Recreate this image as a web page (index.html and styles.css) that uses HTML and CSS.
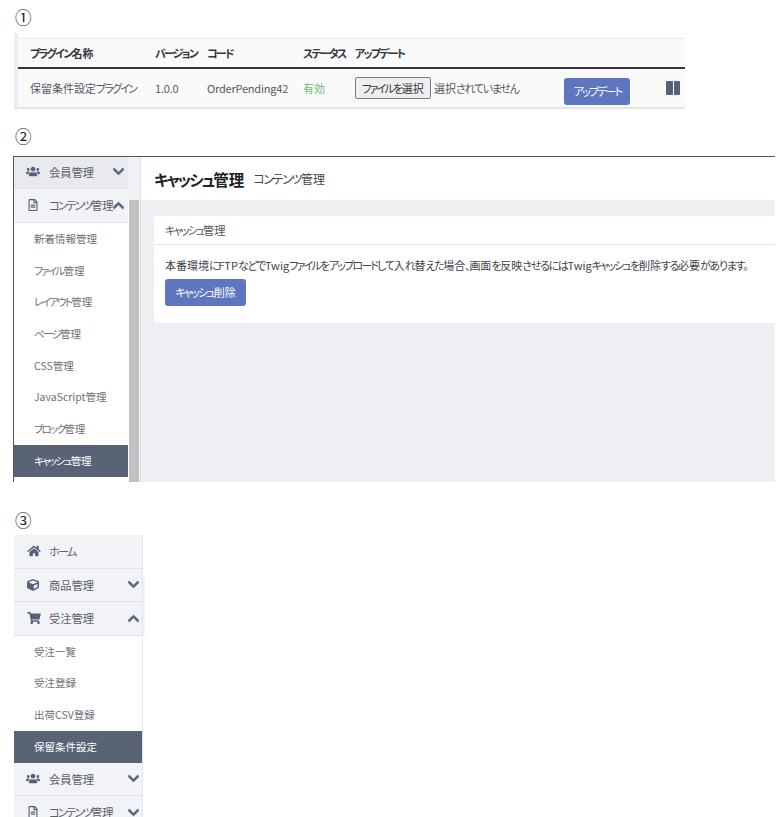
FILE: index.html
```html
<!DOCTYPE html>
<html lang="ja">
<head>
<meta charset="utf-8">
<title>保留条件設定プラグイン</title>
<link rel="stylesheet" href="styles.css">
</head>
<body>
<svg class="defs" width="0" height="0" aria-hidden="true">
  <symbol id="i-down" viewBox="0 0 448 512"><path d="M207.029 381.476L12.686 187.132c-9.373-9.373-9.373-24.569 0-33.941l22.667-22.667c9.357-9.357 24.522-9.375 33.901-.04L224 284.505l154.745-154.021c9.379-9.335 24.544-9.317 33.901.04l22.667 22.667c9.373 9.373 9.373 24.569 0 33.941L240.971 381.476c-9.373 9.372-24.569 9.372-33.942 0z"/></symbol>
  <symbol id="i-up" viewBox="0 0 448 512"><path d="M240.971 130.524l194.343 194.343c9.373 9.373 9.373 24.569 0 33.941l-22.667 22.667c-9.357 9.357-24.522 9.375-33.901.04L224 227.495 69.255 381.516c-9.379 9.335-24.544 9.317-33.901-.04l-22.667-22.667c-9.373-9.373-9.373-24.569 0-33.941L207.03 130.525c9.372-9.373 24.568-9.373 33.941-.001z"/></symbol>
  <symbol id="i-home" viewBox="0 0 576 512"><path d="M280.37 148.26L96 300.11V464a16 16 0 0 0 16 16l112.06-.29a16 16 0 0 0 15.92-16V368a16 16 0 0 1 16-16h64a16 16 0 0 1 16 16v95.64a16 16 0 0 0 16 16.05L464 480a16 16 0 0 0 16-16V300L295.67 148.26a12.19 12.19 0 0 0-15.3 0zM571.6 251.47L488 182.56V44.05a12 12 0 0 0-12-12h-56a12 12 0 0 0-12 12v72.61L318.47 43a48 48 0 0 0-61 0L4.34 251.47a12 12 0 0 0-1.6 16.9l25.5 31A12 12 0 0 0 45.15 301l235.22-193.74a12.19 12.19 0 0 1 15.3 0L530.9 301a12 12 0 0 0 16.9-1.6l25.5-31a12 12 0 0 0-1.7-16.93z"/></symbol>
  <symbol id="i-cart" viewBox="0 0 576 512"><path d="M528.12 301.319l47.273-208C578.806 78.301 567.391 64 551.99 64H159.208l-9.166-44.81C147.758 8.021 137.93 0 126.529 0H24C10.745 0 0 10.745 0 24v16c0 13.255 10.745 24 24 24h69.883l70.248 343.435C147.325 417.1 136 435.222 136 456c0 30.928 25.072 56 56 56s56-25.072 56-56c0-15.674-6.447-29.835-16.824-40h209.647C430.447 426.165 424 440.326 424 456c0 30.928 25.072 56 56 56s56-25.072 56-56c0-22.172-12.888-41.332-31.579-50.405l5.517-24.276c3.413-15.018-8.002-29.319-23.403-29.319H218.117l-6.545-32h293.145c11.206 0 20.92-7.754 23.403-18.681z"/></symbol>
  <symbol id="i-users" viewBox="0 0 640 512"><path d="M96 224c35.3 0 64-28.7 64-64s-28.7-64-64-64-64 28.7-64 64 28.7 64 64 64zm448 0c35.3 0 64-28.7 64-64s-28.7-64-64-64-64 28.7-64 64 28.7 64 64 64zm32 32h-64c-17.6 0-33.5 7.1-45.1 18.6 40.3 22.1 68.9 62 75.1 109.4h66c17.7 0 32-14.3 32-32v-32c0-35.3-28.7-64-64-64zm-256 0c61.9 0 112-50.1 112-112S381.9 32 320 32 208 82.1 208 144s50.1 112 112 112zm76.8 32h-8.3c-20.8 10-43.9 16-68.5 16s-47.6-6-68.5-16h-8.3C179.6 288 128 339.6 128 403.2V432c0 26.5 21.5 48 48 48h288c26.5 0 48-21.5 48-48v-28.8c0-63.6-51.6-115.2-115.2-115.2zm-223.7-13.4C161.5 263.1 145.6 256 128 256H64c-35.3 0-64 28.7-64 64v32c0 17.7 14.3 32 32 32h65.9c6.3-47.4 34.9-87.3 75.2-109.4z"/></symbol>
  <symbol id="i-cube" viewBox="0 0 512 512"><path d="M239.1 6.3l-208 78c-18.7 7-31.1 25-31.1 45v225.1c0 18.2 10.3 34.8 26.5 42.9l208 104c13.5 6.8 29.4 6.8 42.9 0l208-104c16.3-8.1 26.5-24.8 26.5-42.9V129.3c0-20-12.4-37.9-31.1-44.9l-208-78C262 2.2 250 2.2 239.1 6.3zM256 68.4l192 72v1.1l-192 78-192-78v-1.1l192-72zm32 356V275.5l160-65v133.9l-160 80z"/></symbol>
  <symbol id="i-file" viewBox="0 0 384 512"><path d="M288 248v28c0 6.6-5.4 12-12 12H108c-6.6 0-12-5.4-12-12v-28c0-6.6 5.4-12 12-12h168c6.6 0 12 5.4 12 12zm-12 72H108c-6.6 0-12 5.4-12 12v28c0 6.6 5.4 12 12 12h168c6.6 0 12-5.4 12-12v-28c0-6.6-5.4-12-12-12zm108-188.1V464c0 26.5-21.5 48-48 48H48c-26.5 0-48-21.5-48-48V48C0 21.5 21.5 0 48 0h204.1C264.8 0 277 5.1 286 14.1L369.9 98c9 8.9 14.1 21.2 14.1 33.9zm-128-80V128h76.1L256 51.9zM336 464V176H232c-13.3 0-24-10.7-24-24V48H48v416h288z"/></symbol>
</svg>

<p class="num">①</p>
<section class="plugin">
  <div class="row head">
    <span class="c-name"><span class="kn">プラグイン</span>名称</span>
    <span class="c-ver"><span class="kn">バージョン</span></span>
    <span class="c-code"><span class="kn">コード</span></span>
    <span class="c-status"><span class="kn">ステータス</span></span>
    <span class="c-update"><span class="kn">アップデート</span></span>
  </div>
  <div class="row body-row">
    <span class="c-name">保留条件設定<span class="kn">プラグイン</span></span>
    <span class="c-ver latin">1.0.0</span>
    <span class="c-code latin">OrderPending42</span>
    <span class="c-status on">有効</span>
    <span class="c-update file"><span class="file-btn"><span class="kn">ファイル</span><span class="hr">を</span>選択</span><span>選択<span class="hr">されていません</span></span></span>
    <span class="btn btn-up"><span class="kn">アップデート</span></span>
    <span class="pause"><i></i><i></i></span>
  </div>
</section>

<p class="num num2">②</p>
<section class="frame">
  <nav class="side">
    <div class="item closed"><svg class="ic ic-users"><use href="#i-users"/></svg><span class="lbl">会員管理</span><svg class="chev"><use href="#i-down"/></svg></div>
    <div class="item open"><svg class="ic ic-file"><use href="#i-file"/></svg><span class="lbl"><span class="kn">コンテンツ</span>管理</span><svg class="chev"><use href="#i-up"/></svg></div>
    <a class="sub">新着情報管理</a>
    <a class="sub"><span class="kn">ファイル</span>管理</a>
    <a class="sub"><span class="kn">レイアウト</span>管理</a>
    <a class="sub"><span class="kn">ページ</span>管理</a>
    <a class="sub">CSS管理</a>
    <a class="sub">JavaScript管理</a>
    <a class="sub"><span class="kn">ブロック</span>管理</a>
    <a class="sub active"><span class="kn">キャッシュ</span>管理</a>
  </nav>
  <div class="track"><div class="thumb"></div></div>
  <main class="main">
    <header class="title"><h1><span class="kn">キャッシュ</span>管理</h1><span><span class="kn">コンテンツ</span>管理</span></header>
    <div class="content">
      <div class="card">
        <div class="card-head"><span class="kn">キャッシュ</span>管理</div>
        <div class="card-body">
          <p>本番環境<span class="hr">に</span>FTP<span class="hr">などで</span>Twig<span class="kn">ファイル</span><span class="hr">を</span><span class="kn">アップロード</span><span class="hr">して</span>入<span class="hr">れ</span>替<span class="hr">えた</span>場合<span class="hr">、</span>画面<span class="hr">を</span>反映<span class="hr">させるには</span>Twig<span class="kn">キャッシュ</span><span class="hr">を</span>削除<span class="hr">する</span>必要<span class="hr">があります。</span></p>
          <span class="btn btn-del"><span class="kn">キャッシュ</span>削除</span>
        </div>
      </div>
    </div>
  </main>
</section>

<p class="num num3">③</p>
<nav class="side3">
  <div class="item"><svg class="ic ic-home"><use href="#i-home"/></svg><span class="lbl"><span class="kn">ホーム</span></span></div>
  <div class="item"><svg class="ic ic-cube"><use href="#i-cube"/></svg><span class="lbl">商品管理</span><svg class="chev"><use href="#i-down"/></svg></div>
  <div class="item"><svg class="ic ic-cart"><use href="#i-cart"/></svg><span class="lbl">受注管理</span><svg class="chev"><use href="#i-up"/></svg></div>
  <a class="sub">受注一覧</a>
  <a class="sub">受注登録</a>
  <a class="sub">出荷CSV登録</a>
  <a class="sub active">保留条件設定</a>
  <div class="item"><svg class="ic ic-users"><use href="#i-users"/></svg><span class="lbl">会員管理</span><svg class="chev"><use href="#i-down"/></svg></div>
  <div class="item"><svg class="ic ic-file"><use href="#i-file"/></svg><span class="lbl"><span class="kn">コンテンツ</span>管理</span><svg class="chev"><use href="#i-down"/></svg></div>
</nav>
</body>
</html>
```

FILE: styles.css
```css
* { box-sizing: border-box; }
html, body { margin: 0; height: 817px; overflow: hidden; background: #fff; }
body {
  font-family: "Noto Sans CJK JP", "Noto Sans", sans-serif;
  font-size: 11px;
  font-feature-settings: "palt";
  color: #54585f;
}
.defs { position: absolute; }
.kn { letter-spacing: -.165em; }
.hr { letter-spacing: -.12em; }
.latin { letter-spacing: -.2px; }
.num {
  margin: 0 0 0 15px;
  height: 33px;
  padding-top: 7px;
  font-size: 16.5px;
  line-height: 20px;
  color: #222;
  font-feature-settings: normal;
}
.num2 { margin-top: 12px; height: 34px; padding-top: 4px; }
.num3 { margin-top: 24px; height: 29px; padding-top: 4px; }

/* section 1 */
.plugin {
  margin-left: 14px;
  width: 671px;
  height: 77px;
  padding-top: 5px;
  border-left: 4px solid #eceef3;
}
.row { display: flex; align-items: center; position: relative; padding-left: 12px; background: #fafafa; }
.head {
  height: 31px;
  border-top: 1px solid #e8e8e8;
  border-bottom: 2px solid #35363d;
  font-weight: 700;
  color: #35383d;
}
.body-row { height: 40px; border-bottom: 2px solid #e4e4e4; }
.c-name { width: 125px; flex: none; }
.c-ver { width: 52px; flex: none; }
.c-code { width: 96px; flex: none; }
.c-status { width: 52px; flex: none; }
.c-update { flex: none; }
.on { color: #6dba78; }
.file { display: flex; align-items: center; gap: 3px; }
.file-btn {
  display: block;
  width: 76px;
  height: 22px;
  line-height: 20px;
  text-align: center;
  white-space: nowrap;
  border: 1px solid #7b7b7b;
  border-radius: 2px;
  background: #efefef;
  color: #333;
}
.btn {
  display: block;
  background: #5d76bf;
  border-radius: 3px;
  color: #fff;
  text-align: center;
}
.btn-up { margin-left: 46px; width: 66px; height: 27px; line-height: 27px; margin-top: 7px; flex: none; }
.pause { display: flex; gap: 1px; margin-left: 36px; flex: none; }
.pause i { display: block; width: 6.5px; height: 14px; background: #566076; border-radius: 1px; }

/* section 2 */
.frame {
  margin-left: 13px;
  width: 762px;
  height: 326px;
  display: flex;
  border-top: 1px solid #4f5566;
  border-left: 1px solid #4f5566;
}
.side { width: 114px; flex: none; }
.item {
  display: flex;
  align-items: center;
  background: #f2f3f6;
  border-bottom: 1px solid #dfe1e8;
  color: #5c6068;
  font-size: 11.25px;
}
.frame .closed { height: 32px; padding-bottom: 2px; background: #e9eaee; }
.frame .open { height: 34px; padding-bottom: 1px; }
.ic { flex: none; fill: #54607a; }
.ic-users { width: 14px; height: 11px; margin: 0 9px 0 12px; }
.ic-file { width: 10px; height: 12px; margin: 0 11px 0 14px; }
.ic-home { width: 14px; height: 12px; margin: 0 8px 0 13px; }
.ic-cube { width: 12px; height: 12px; margin: 0 10px 0 13px; }
.ic-cart { width: 14px; height: 12px; margin: 0 8px 0 13px; }
.lbl { flex: 1; white-space: nowrap; }
.chev { width: 11px; height: 13px; fill: #54607a; stroke: #54607a; stroke-width: 30; flex: none; margin-right: 3px; }
.side .chev { margin-right: 4px; }
.sub {
  display: block;
  height: 31.7px;
  line-height: 31.7px;
  padding-left: 20px;
  font-size: 10.5px;
  color: #6b6f76;
}
.active { background: #596376; color: #fff; }
.track { width: 13px; flex: none; padding: 43px 1px 0 1px; background: #f0f1f4; border-right: 1px solid #dfe1e8; }
.thumb { height: 282px; width: 10px; background: #c1c1c1; box-shadow: -1px 0 0 #fff; }
.main { flex: 1; min-width: 0; display: flex; flex-direction: column; }
.title {
  height: 43px;
  display: flex;
  align-items: center;
  gap: 9px;
  padding-left: 13px;
  background: #fff;
  font-size: 12px;
  color: #444;
}
.title .kn { letter-spacing: -.115em; }
.title h1 { margin: 0; font-size: 15.5px; font-weight: 700; color: #222; }
.content { flex: 1; padding: 16px 0 0 13px; background: #eeeff3; }
.card { height: 107px; background: #fff; border-radius: 3px 0 0 3px; }
.card-head { height: 29px; padding-left: 11px; line-height: 28px; border-bottom: 1px solid #e8e8e8; font-size: 11.25px; color: #54585f; }
.card-head .kn { letter-spacing: -.185em; }
.card-body { padding: 11px 0 0 11px; font-size: 11px; color: #3f434a; }
.card-body p { margin: 0; line-height: 18px; white-space: nowrap; }
.btn-del { width: 81px; height: 27px; line-height: 27px; margin-top: 5px; }

/* section 3 */
.side3 { position: relative; margin-left: 14px; width: 129px; border-right: 1px solid #e3e5ec; }
.side3::after { content: ""; position: absolute; left: 129px; top: 43px; width: 2px; height: 57px; background: #eef0f4; }
.side3 .item { height: 33.6px; }
```
